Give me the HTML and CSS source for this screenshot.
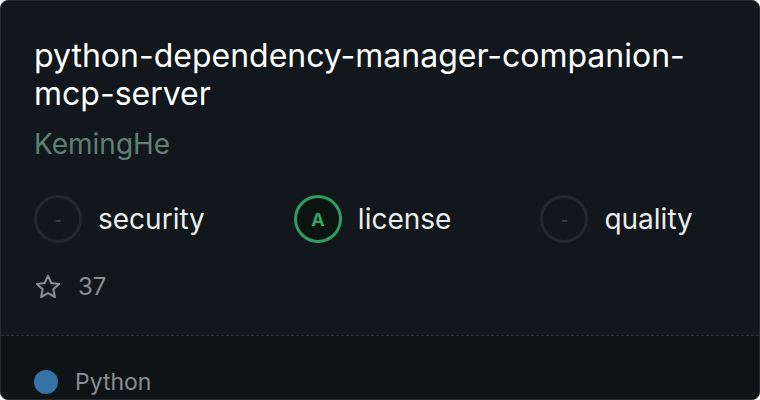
FILE: index.html
```html
<!DOCTYPE html>
<html>
<head>
<meta charset="utf-8">
<link rel="stylesheet" href="styles.css">
</head>
<body>
<div class="card">
  <div class="main">
    <h1 class="title">python-dependency-manager-companion-<br>mcp-server</h1>
    <div class="owner">KemingHe</div>
    <div class="scores">
      <div class="score">
        <span class="ring ring-none">-</span>
        <span class="label">security</span>
      </div>
      <div class="score">
        <span class="ring ring-a">A</span>
        <span class="label">license</span>
      </div>
      <div class="score">
        <span class="ring ring-none">-</span>
        <span class="label">quality</span>
      </div>
    </div>
    <div class="stars">
      <svg class="star" viewBox="0 0 24 24" width="28" height="28" fill="none" stroke="currentColor" stroke-width="1.8" stroke-linejoin="round">
        <path d="M12 2.5l2.9 6.1 6.6.8-4.9 4.6 1.3 6.6L12 17.3l-5.9 3.3 1.3-6.6-4.9-4.6 6.6-.8z"/>
      </svg>
      <span class="count">37</span>
    </div>
  </div>
  <div class="footer">
    <span class="dot"></span>
    <span class="lang">Python</span>
  </div>
</div>
</body>
</html>
```

FILE: styles.css
```css
html, body {
  margin: 0;
  padding: 0;
  background: #ffffff;
}
body {
  font-family: Inter, "Noto Sans", sans-serif;
}
.card {
  width: 760px;
  height: 400px;
  box-sizing: border-box;
  border: 1px solid #262b2e;
  border-radius: 8px;
  background: #11171a;
  overflow: hidden;
  display: flex;
  flex-direction: column;
}
.main {
  padding: 36px 33px 0 33px;
  height: 298px;
  border-bottom: 1px dashed #2c3236;
}
.title {
  margin: 0;
  font-size: 32px;
  font-weight: 400;
  line-height: 38px;
  color: #ffffff;
  letter-spacing: 0;
}
.owner {
  margin-top: 15px;
  font-size: 28px;
  line-height: 32px;
  color: #5d8072;
}
.scores {
  margin-top: 35px;
  display: flex;
  gap: 89px;
}
.score {
  display: flex;
  align-items: center;
  gap: 16px;
}
.ring {
  width: 48px;
  height: 48px;
  box-sizing: border-box;
  border-radius: 50%;
  border: 3px solid #22282b;
  display: flex;
  align-items: center;
  justify-content: center;
  font-size: 15px;
  font-weight: 700;
  color: #3a3f42;
}
.ring-a {
  border-color: #2c9e62;
  color: #30a868;
  background: #0c1412;
  font-size: 18px;
}
.label {
  font-size: 28px;
  color: #ececec;
}
.stars {
  margin-top: 29px;
  display: flex;
  align-items: center;
  gap: 16px;
  color: #8a8d90;
}
.star {
  display: block;
}
.count {
  font-size: 24px;
  color: #8a8d90;
}
.footer {
  flex: 1;
  background: #0e1316;
  display: flex;
  align-items: flex-end;
  padding: 0 33px 2px;
  gap: 17px;
}
.dot {
  width: 24px;
  height: 24px;
  border-radius: 50%;
  background: #3572a5;
  margin-bottom: 3px;
}
.lang {
  font-size: 23px;
  line-height: 30px;
  color: #8a8d90;
}
```
